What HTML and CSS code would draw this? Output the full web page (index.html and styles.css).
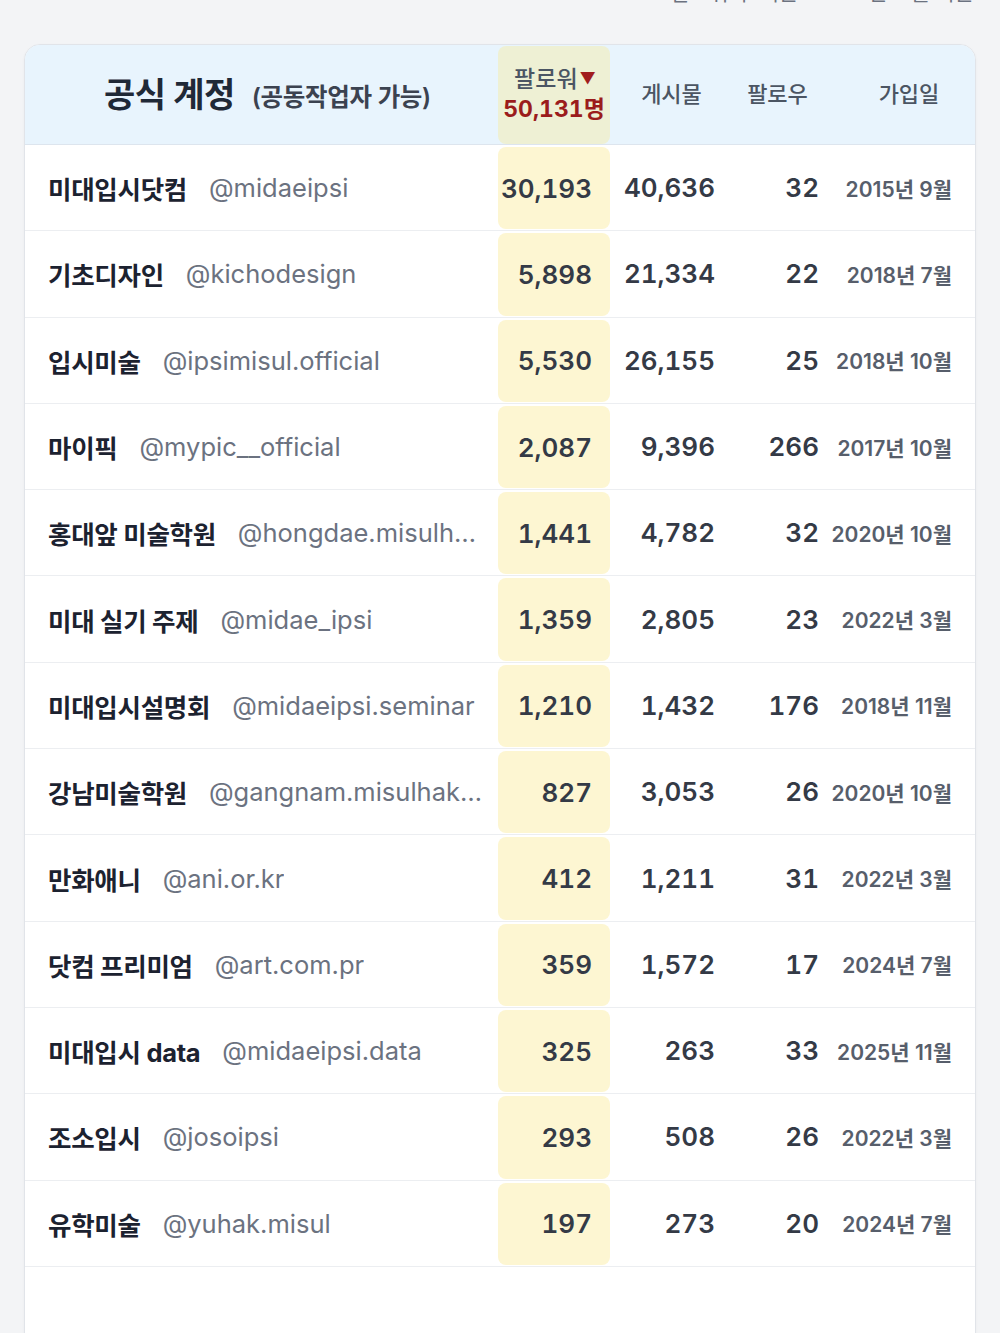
FILE: index.html
```html
<!DOCTYPE html>
<html lang="ko">
<head>
<meta charset="utf-8">
<title>공식 계정</title>
<link rel="stylesheet" href="styles.css">
</head>
<body>
<div class="page">
  <p class="note">팔로워 수 기준 · 2025년 11월 기준</p>
  <div class="card">
    <div class="row head">
      <div class="c-name head-title">
        <span class="title">공식 계정</span>
        <span class="sub">(공동작업자 가능)</span>
      </div>
      <div class="c-fol hl hl-head">
        <span class="h-lbl">팔로워<span class="tri">▼</span></span>
        <span class="total">50,131명</span>
      </div>
      <div class="c-post h-lbl">게시물</div>
      <div class="c-follow h-lbl h-follow">팔로우</div>
      <div class="c-date h-lbl h-date">가입일</div>
    </div>

    <div class="row"><div class="c-name"><span class="nm">미대입시닷컴</span><span class="hd">@midaeipsi</span></div><div class="c-fol hl">30,193</div><div class="c-post num">40,636</div><div class="c-follow num">32</div><div class="c-date dt">2015년 9월</div></div>
    <div class="row"><div class="c-name"><span class="nm">기초디자인</span><span class="hd">@kichodesign</span></div><div class="c-fol hl">5,898</div><div class="c-post num">21,334</div><div class="c-follow num">22</div><div class="c-date dt">2018년 7월</div></div>
    <div class="row"><div class="c-name"><span class="nm">입시미술</span><span class="hd">@ipsimisul.official</span></div><div class="c-fol hl">5,530</div><div class="c-post num">26,155</div><div class="c-follow num">25</div><div class="c-date dt">2018년 10월</div></div>
    <div class="row"><div class="c-name"><span class="nm">마이픽</span><span class="hd">@mypic__official</span></div><div class="c-fol hl">2,087</div><div class="c-post num">9,396</div><div class="c-follow num">266</div><div class="c-date dt">2017년 10월</div></div>
    <div class="row"><div class="c-name"><span class="nm">홍대앞 미술학원</span><span class="hd">@hongdae.misulh…</span></div><div class="c-fol hl">1,441</div><div class="c-post num">4,782</div><div class="c-follow num">32</div><div class="c-date dt">2020년 10월</div></div>
    <div class="row"><div class="c-name"><span class="nm">미대 실기 주제</span><span class="hd">@midae_ipsi</span></div><div class="c-fol hl">1,359</div><div class="c-post num">2,805</div><div class="c-follow num">23</div><div class="c-date dt">2022년 3월</div></div>
    <div class="row"><div class="c-name"><span class="nm">미대입시설명회</span><span class="hd">@midaeipsi.seminar</span></div><div class="c-fol hl">1,210</div><div class="c-post num">1,432</div><div class="c-follow num">176</div><div class="c-date dt">2018년 11월</div></div>
    <div class="row"><div class="c-name"><span class="nm">강남미술학원</span><span class="hd">@gangnam.misulhak…</span></div><div class="c-fol hl">827</div><div class="c-post num">3,053</div><div class="c-follow num">26</div><div class="c-date dt">2020년 10월</div></div>
    <div class="row"><div class="c-name"><span class="nm">만화애니</span><span class="hd">@ani.or.kr</span></div><div class="c-fol hl">412</div><div class="c-post num">1,211</div><div class="c-follow num">31</div><div class="c-date dt">2022년 3월</div></div>
    <div class="row"><div class="c-name"><span class="nm">닷컴 프리미엄</span><span class="hd">@art.com.pr</span></div><div class="c-fol hl">359</div><div class="c-post num">1,572</div><div class="c-follow num">17</div><div class="c-date dt">2024년 7월</div></div>
    <div class="row"><div class="c-name"><span class="nm">미대입시 data</span><span class="hd">@midaeipsi.data</span></div><div class="c-fol hl">325</div><div class="c-post num">263</div><div class="c-follow num">33</div><div class="c-date dt">2025년 11월</div></div>
    <div class="row"><div class="c-name"><span class="nm">조소입시</span><span class="hd">@josoipsi</span></div><div class="c-fol hl">293</div><div class="c-post num">508</div><div class="c-follow num">26</div><div class="c-date dt">2022년 3월</div></div>
    <div class="row"><div class="c-name"><span class="nm">유학미술</span><span class="hd">@yuhak.misul</span></div><div class="c-fol hl">197</div><div class="c-post num">273</div><div class="c-follow num">20</div><div class="c-date dt">2024년 7월</div></div>

    <div class="card-foot"></div>
  </div>
</div>
</body>
</html>
```

FILE: styles.css
```css
* { box-sizing: border-box; }

html, body {
  margin: 0;
  padding: 0;
  background: #f3f4f6;
}

body {
  font-family: "Inter", "Noto Sans CJK KR", "Noto Sans", sans-serif;
  color: #1f2430;
}

.page {
  padding: 0 24px;
}

.note {
  margin: -19px 0 0;
  height: 24px;
  font-size: 21px;
  line-height: 24px;
  text-align: right;
  color: #6b7280;
  padding-right: 2px;
}

.card {
  margin-top: 39px;
  background: #ffffff;
  border: 1px solid #e1e4e9;
  border-radius: 16px;
  overflow: hidden;
  box-shadow: 0 1px 3px rgba(0, 0, 0, 0.04);
}

.row {
  display: flex;
  align-items: stretch;
  height: 86.3px;
  border-bottom: 1px solid #eceef1;
}

.row > div {
  display: flex;
  align-items: center;
  min-width: 0;
  white-space: nowrap;
}

.head {
  height: 100px;
  background: #e8f4fd;
  border-bottom: 1px solid #dde5ee;
}

.c-name {
  flex: 1 1 auto;
  padding: 0 14px 0 23px;
  overflow: hidden;
}

.c-fol {
  flex: 0 0 112px;
  justify-content: flex-end;
  padding-right: 18px;
}

.c-post {
  flex: 0 0 123px;
  justify-content: flex-end;
  padding-right: 18px;
}

.c-follow {
  flex: 0 0 103px;
  justify-content: flex-end;
  padding-right: 17px;
}

.c-date {
  flex: 0 0 139px;
  justify-content: flex-end;
  padding-right: 23px;
}

/* header */
.head-title {
  justify-content: center;
  padding: 0 0 5px 12px !important;
}
.title {
  font-size: 34px;
  font-weight: 700;
  color: #1f2937;
  letter-spacing: -0.5px;
}
.sub {
  margin-left: 17px;
  margin-top: 6px;
  font-size: 24.5px;
  font-weight: 600;
  color: #3b4250;
  letter-spacing: -0.3px;
}

.h-lbl {
  font-size: 22px;
  font-weight: 500;
  color: #4b5563;
  justify-content: center !important;
  padding: 0 0 6px !important;
}
.h-follow {
  padding-right: 14px !important;
}
.h-date {
  padding-left: 7px !important;
}

.hl {
  margin: 2px 0 1px;
  background: #fdf6d2;
  border-radius: 8px;
  font-size: 26px;
  font-weight: 600;
  color: #343a46;
  font-variant-numeric: tabular-nums;
}

.hl-head {
  background: #eef0d4;
  flex-direction: column;
  justify-content: center !important;
  align-items: center !important;
  padding: 0 0 4px !important;
  margin: 1px 0 0;
  gap: 2px;
}
.hl-head .h-lbl {
  display: block;
  line-height: 28px;
  padding: 0 0 0 2px !important;
  font-size: 23px;
}
.tri {
  font-size: 16px;
  color: #a11d1d;
  margin-left: 2px;
  vertical-align: 3px;
}
.total {
  font-size: 23px;
  font-weight: 700;
  color: #9b1c1c;
  line-height: 28px;
}

/* body cells */
.nm {
  font-size: 25.5px;
  font-weight: 700;
  color: #1c2230;
  letter-spacing: -0.3px;
}
.hd {
  margin-left: 22px;
  font-size: 25.5px;
  font-weight: 400;
  color: #6b7280;
  overflow: hidden;
  text-overflow: ellipsis;
}

.num {
  font-size: 26px;
  font-weight: 600;
  color: #343a46;
  font-variant-numeric: tabular-nums;
}

.dt {
  font-size: 21px;
  font-weight: 600;
  color: #575e6b;
}

.card-foot {
  height: 120px;
}
```
